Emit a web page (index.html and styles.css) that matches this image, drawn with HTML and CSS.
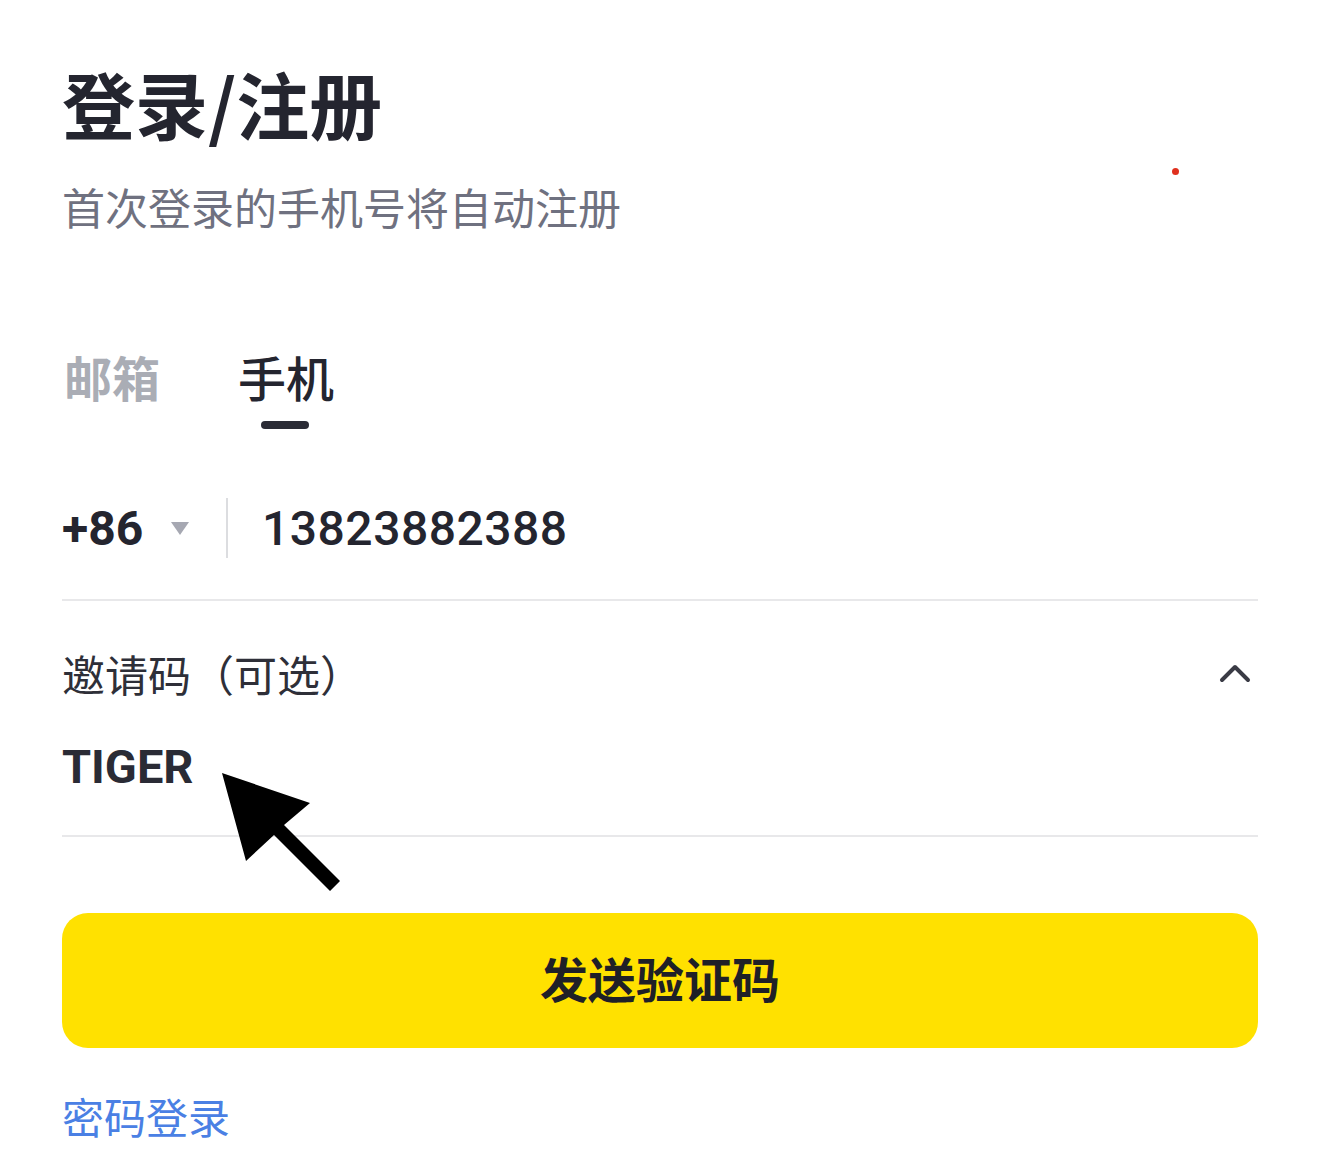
FILE: index.html
```html
<!DOCTYPE html>
<html lang="zh-CN">
<head>
    <meta charset="UTF-8">
    <meta name="viewport" content="width=device-width, initial-scale=1.0">
    <title>登录/注册</title>
<link rel="stylesheet" href="styles.css">
</head>
<body>
    <div class="page">
        <span class="dot"></span>
        <h1 class="title">登录/注册</h1>
        <p class="subtitle">首次登录的手机号将自动注册</p>

        <div class="tabs">
            <div class="tab">邮箱</div>
            <div class="tab active">手机</div>
        </div>

        <div class="field phone">
            <div class="code">+86 <span class="caret"></span></div>
            <div class="divider"></div>
            <div class="number">13823882388</div>
        </div>

        <div class="field invite">
            <div class="invite-head">
                <span>邀请码（可选）</span>
                <svg class="chevron" width="34" height="22" viewBox="0 0 34 22">
                    <path d="M4 18 L17 5 L30 18" fill="none" stroke="#3a3b45" stroke-width="4" stroke-linecap="round" stroke-linejoin="round"/>
                </svg>
            </div>
            <div class="invite-value">TIGER</div>
            <!-- flecha de anotacion -->
            <svg class="pointer" width="130" height="130" viewBox="0 0 130 130">
                <polygon points="0,0 88,30 62,52 118,108 108,118 52,62 24,88" fill="#000"/>
            </svg>
        </div>

        <button class="send">发送验证码</button>
        <a class="link" href="#">密码登录</a>
    </div>
</body>
</html>
```

FILE: styles.css
```css
/* Estilo general */
body {
    margin: 0;
    padding: 0;
    background-color: #fff;
    font-family: "Roboto", "Noto Sans CJK SC", sans-serif;
    color: #24252f;
}

.page {
    position: relative;
    padding: 50px 62px 0 62px;
}

.dot {
    position: absolute;
    left: 1172px;
    top: 168px;
    width: 7px;
    height: 7px;
    border-radius: 50%;
    background-color: #e0301e;
}

/* Titulo */
.title {
    margin: 0;
    font-family: "Noto Sans CJK SC", sans-serif;
    font-size: 73px;
    font-weight: 700;
    line-height: 104px;
    color: #24252f;
}

.subtitle {
    margin: 22px 0 0 0;
    font-family: "Noto Sans CJK SC", sans-serif;
    font-size: 43px;
    line-height: 60px;
    color: #6f7180;
}

/* Pestanas */
.tabs {
    display: flex;
    gap: 78px;
    margin-top: 110px;
    padding-left: 2px;
}

.tab {
    position: relative;
    font-family: "Noto Sans CJK SC", sans-serif;
    font-size: 48px;
    font-weight: 700;
    line-height: 60px;
    color: #aaadb5;
}

.tab.active {
    color: #24252f;
    font-weight: 500;
}

.tab.active::after {
    content: "";
    position: absolute;
    left: 23px;
    top: 75px;
    width: 48px;
    height: 8px;
    border-radius: 4px;
    background-color: #2a2b35;
}

/* Campos */
.field {
    border-bottom: 2px solid #e8e8ea;
}

.phone {
    display: flex;
    align-items: center;
    margin-top: 62px;
    height: 120px;
    padding-bottom: 11px;
}

.code {
    display: flex;
    align-items: center;
    font-size: 48px;
    font-weight: 700;
    width: 164px;
}

.caret {
    display: inline-block;
    margin-left: 28px;
    width: 0;
    height: 0;
    border-left: 9px solid transparent;
    border-right: 9px solid transparent;
    border-top: 13px solid #a6a8b2;
}

.divider {
    width: 2px;
    height: 60px;
    background-color: #dcdde0;
}

.number {
    margin-left: 34px;
    font-size: 48px;
    font-weight: 500;
    letter-spacing: 0.5px;
}

.invite {
    position: relative;
    padding: 42px 0 42px 0;
}

.invite-head {
    display: flex;
    justify-content: space-between;
    align-items: center;
    font-family: "Noto Sans CJK SC", sans-serif;
    font-size: 43px;
    line-height: 60px;
    color: #2e2f38;
}

.chevron {
    margin-right: 6px;
}

.invite-value {
    margin-top: 38px;
    font-size: 47px;
    font-weight: 700;
    line-height: 52px;
    color: #2a2b35;
}

.pointer {
    position: absolute;
    left: 160px;
    top: 172px;
}

/* Boton */
.send {
    display: block;
    width: 100%;
    height: 135px;
    margin-top: 76px;
    padding: 0 0 8px 0;
    border: none;
    border-radius: 26px;
    background-color: #ffe100;
    font-family: "Noto Sans CJK SC", sans-serif;
    font-size: 48px;
    font-weight: 700;
    color: #1f2027;
    cursor: pointer;
}

.link {
    display: inline-block;
    margin-top: 38px;
    font-family: "Noto Sans CJK SC", sans-serif;
    font-size: 42px;
    line-height: 60px;
    color: #4a80e4;
    text-decoration: none;
}
```
